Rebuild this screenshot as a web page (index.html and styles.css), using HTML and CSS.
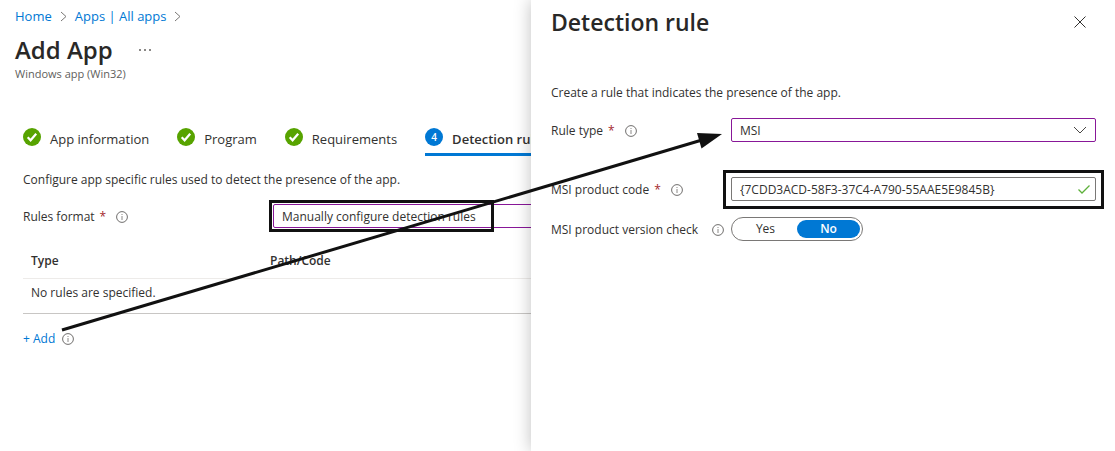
FILE: index.html
```html
<!DOCTYPE html>
<html lang="en">
<head>
<meta charset="utf-8">
<title>Add App</title>
<link rel="stylesheet" href="styles.css">
</head>
<body>
<svg class="defs" aria-hidden="true">
  <symbol id="info" viewBox="0 0 12 12"><circle cx="6" cy="6" r="5.4" fill="none" stroke="#605e5c" stroke-width=".9"/><path d="M6 5v4M6 3v1" stroke="#8a8886" stroke-width="1"/></symbol>
  <symbol id="done" viewBox="0 0 18 18"><circle cx="9" cy="9" r="9" fill="#57a300"/><path d="M4.7 9.2l2.9 3.1 5.6-6.6" fill="none" stroke="#fff" stroke-width="2.2"/></symbol>
  <symbol id="next" viewBox="0 0 7 11"><path d="M1 1l5 4.500-5 4.500" fill="none" stroke="#797775" stroke-width="1"/></symbol>
</svg>
<div class="portal">
  <main class="main">
    <nav class="crumbs" aria-label="Breadcrumb">
      <a href="#">Home</a><svg class="next"><use href="#next"/></svg>
      <a href="#">Apps | All apps</a><svg class="next"><use href="#next"/></svg>
    </nav>
    <header class="head">
      <h1 class="title">Add App</h1>
      <button class="more" type="button" aria-label="More"><svg width="12" height="4" viewBox="0 0 12 4"><path d="M0 1h2v2H0zM5 1h2v2H5zM10 1h2v2h-2z" fill="#8a8886"/></svg></button>
    </header>
    <p class="subtitle">Windows app (Win32)</p>
    <div class="content">
      <nav class="tabs" aria-label="Steps">
        <a class="tab" href="#"><svg class="step"><use href="#done"/></svg>App information</a>
        <a class="tab" href="#"><svg class="step"><use href="#done"/></svg>Program</a>
        <a class="tab" href="#"><svg class="step"><use href="#done"/></svg>Requirements</a>
        <a class="tab current" href="#" aria-current="step"><span class="step number">4</span>Detection rules</a>
      </nav>
      <p class="text">Configure app specific rules used to detect the presence of the app.</p>
      <div class="row format">
        <div class="label"><label for="format">Rules format</label><span class="required">*</span><svg class="info"><use href="#info"/></svg></div>
        <div class="field"><select id="format" class="input picked"><option>Manually configure detection rules</option></select><span class="mark mark-format"></span></div>
      </div>
      <table class="rules">
        <thead><tr><th class="type">Type</th><th>Path/Code</th></tr></thead>
        <tbody><tr><td colspan="2">No rules are specified.</td></tr></tbody>
      </table>
      <div class="add"><a href="#">+ Add</a><svg class="info"><use href="#info"/></svg></div>
    </div>
  </main>
  <aside class="panel">
    <header class="panel-head">
      <h2 class="title panel-title">Detection rule</h2>
      <button class="close" type="button" aria-label="Close"><svg width="12" height="12" viewBox="0 0 12 12"><path d="M.5.5l11 11M11.500.5l-11 11" stroke="#323130" stroke-width="1"/></svg></button>
    </header>
    <p class="text">Create a rule that indicates the presence of the app.</p>
    <form class="form">
      <div class="row rule-type">
        <div class="label"><label for="rule">Rule type</label><span class="required">*</span><svg class="info"><use href="#info"/></svg></div>
        <div class="field"><select id="rule" class="input picked"><option>MSI</option></select><svg class="glyph" width="14" height="8" viewBox="0 0 14 8"><path d="M1 1l6 6 6-6" fill="none" stroke="#484644" stroke-width="1"/></svg></div>
      </div>
      <div class="row">
        <div class="label"><label for="code">MSI product code</label><span class="required">*</span><svg class="info"><use href="#info"/></svg></div>
        <div class="field"><input id="code" class="input" type="text" value="{7CDD3ACD-58F3-37C4-A790-55AAE5E9845B}"><svg class="glyph valid" width="12" height="9" viewBox="0 0 12 9"><path d="M.5 4.500l3.500 3.500 7.500-7.500" fill="none" stroke="#5db03a" stroke-width="1.300"/></svg><span class="mark mark-code"></span></div>
      </div>
      <div class="row">
        <div class="label spread"><span id="check">MSI product version check</span><svg class="info"><use href="#info"/></svg></div>
        <div class="toggle" role="radiogroup" aria-labelledby="check">
          <label class="choice"><input type="radio" name="check" class="radio"><span class="pill">Yes</span></label>
          <label class="choice"><input type="radio" name="check" class="radio" checked><span class="pill">No</span></label>
        </div>
      </div>
    </form>
  </aside>
  <svg class="arrow" width="1115" height="451" viewBox="0 0 1115 451" aria-hidden="true"><path d="M62 330L702 140" stroke="#111" stroke-width="3"/><path d="M722 134L697 133 701.500 148.500z" fill="#111"/></svg>
</div>
</body>
</html>
```
FILE: styles.css
```css
* { box-sizing: border-box; }
body, h1, h2, p { margin: 0; }
body { background: #fff; color: #323130; font: 12px/18px "Segoe UI", "Open Sans", sans-serif; }
a { color: #0078d4; text-decoration: none; }
button { padding: 0; border: 0; background: none; display: flex; cursor: pointer; }
.defs { position: absolute; width: 0; height: 0; }
.portal { position: relative; min-height: 100vh; overflow: hidden; }
.main { padding: 7px 0 0 15px; white-space: nowrap; }
.crumbs { display: flex; align-items: center; gap: 8px; font-size: 13px; }
.next { width: 7px; height: 11px; }
.head { display: flex; align-items: center; gap: 26px; padding-top: 9px; }
.title { color: #292827; font-size: 24px; line-height: 32px; font-weight: 600; }
.panel-title { font-size: 23px; }
.subtitle { color: #605e5c; font-size: 11px; line-height: 16px; }
.content { padding: 46px 0 0 8px; }
.tabs { display: flex; gap: 28px; height: 28px; }
.tab { display: flex; gap: 9px; font-size: 13px; line-height: 22px; color: #323130; }
.current { font-weight: 600; border-bottom: 3px solid #0078d4; padding-right: 8px; }
.step { width: 18px; height: 18px; flex: none; }
.number { border-radius: 50%; background: #0078d4; color: #fff; font-size: 10px; line-height: 18px; text-align: center; }
.content .text { padding-top: 15px; }
.row { display: grid; grid-template-columns: 180px 1fr; align-items: center; }
.format { grid-template-columns: 250px 1fr; padding-top: 15px; }
.label { display: flex; align-items: center; padding-top: 2px; }
.spread { justify-content: space-between; padding-right: 7px; }
.required { color: #a4262c; margin: 0 10px 0 5px; }
.info { width: 12px; height: 12px; flex: none; }
.field { position: relative; }
.input { display: block; width: 100%; height: 24px; padding: 1px 8px 0; border: 1px solid #7a7876; border-radius: 2px; background: #fff; color: #323130; font: inherit; appearance: none; outline: 0; }
.picked { border-color: #881798; }
.mark { position: absolute; border: 3px solid #111; pointer-events: none; }
.mark-format { z-index: 2; left: -4px; top: -4px; bottom: -4px; width: 225px; }
.mark-code { inset: -7px -8px -8px; }
.rules { width: 100%; margin-top: 14px; border-collapse: collapse; text-align: left; }
.rules th, .rules td { height: 35px; padding: 0 8px; }
.rules th { height: 36px; padding-top: 2px; font-weight: 600; border-bottom: 1px solid #edebe9; }
.rules .type { width: 239px; }
.rules td { padding-bottom: 6px; border-bottom: 1px solid #c8c6c4; }
.add { display: flex; align-items: center; gap: 7px; padding-top: 16px; }
.panel { position: absolute; inset: 0 0 0 auto; width: 584px; padding: 6px 19px 0 20px; background: #fff; box-shadow: 0 0 16px rgba(0, 0, 0, .25); }
.panel-head { display: flex; align-items: center; justify-content: space-between; padding-right: 10px; }
.panel .text { padding-top: 46px; }
.form { display: grid; gap: 16px; padding-top: 16px; }
.rule-type { padding-bottom: 19px; }
.glyph { position: absolute; right: 9px; top: 8px; pointer-events: none; }
.valid { right: 6px; }
.toggle { display: grid; grid-template-columns: 1fr 1fr; width: 132px; height: 24px; padding: 2px; border: 1px solid #7a7876; border-radius: 12px; }
.choice { position: relative; }
.radio { position: absolute; inset: 0; margin: 0; opacity: 0; }
.pill { display: block; border-radius: 9px; text-align: center; }
.radio:checked + .pill { background: #0078d4; color: #fff; font-weight: 600; }
.arrow { position: absolute; left: 0; top: 0; pointer-events: none; }
```
